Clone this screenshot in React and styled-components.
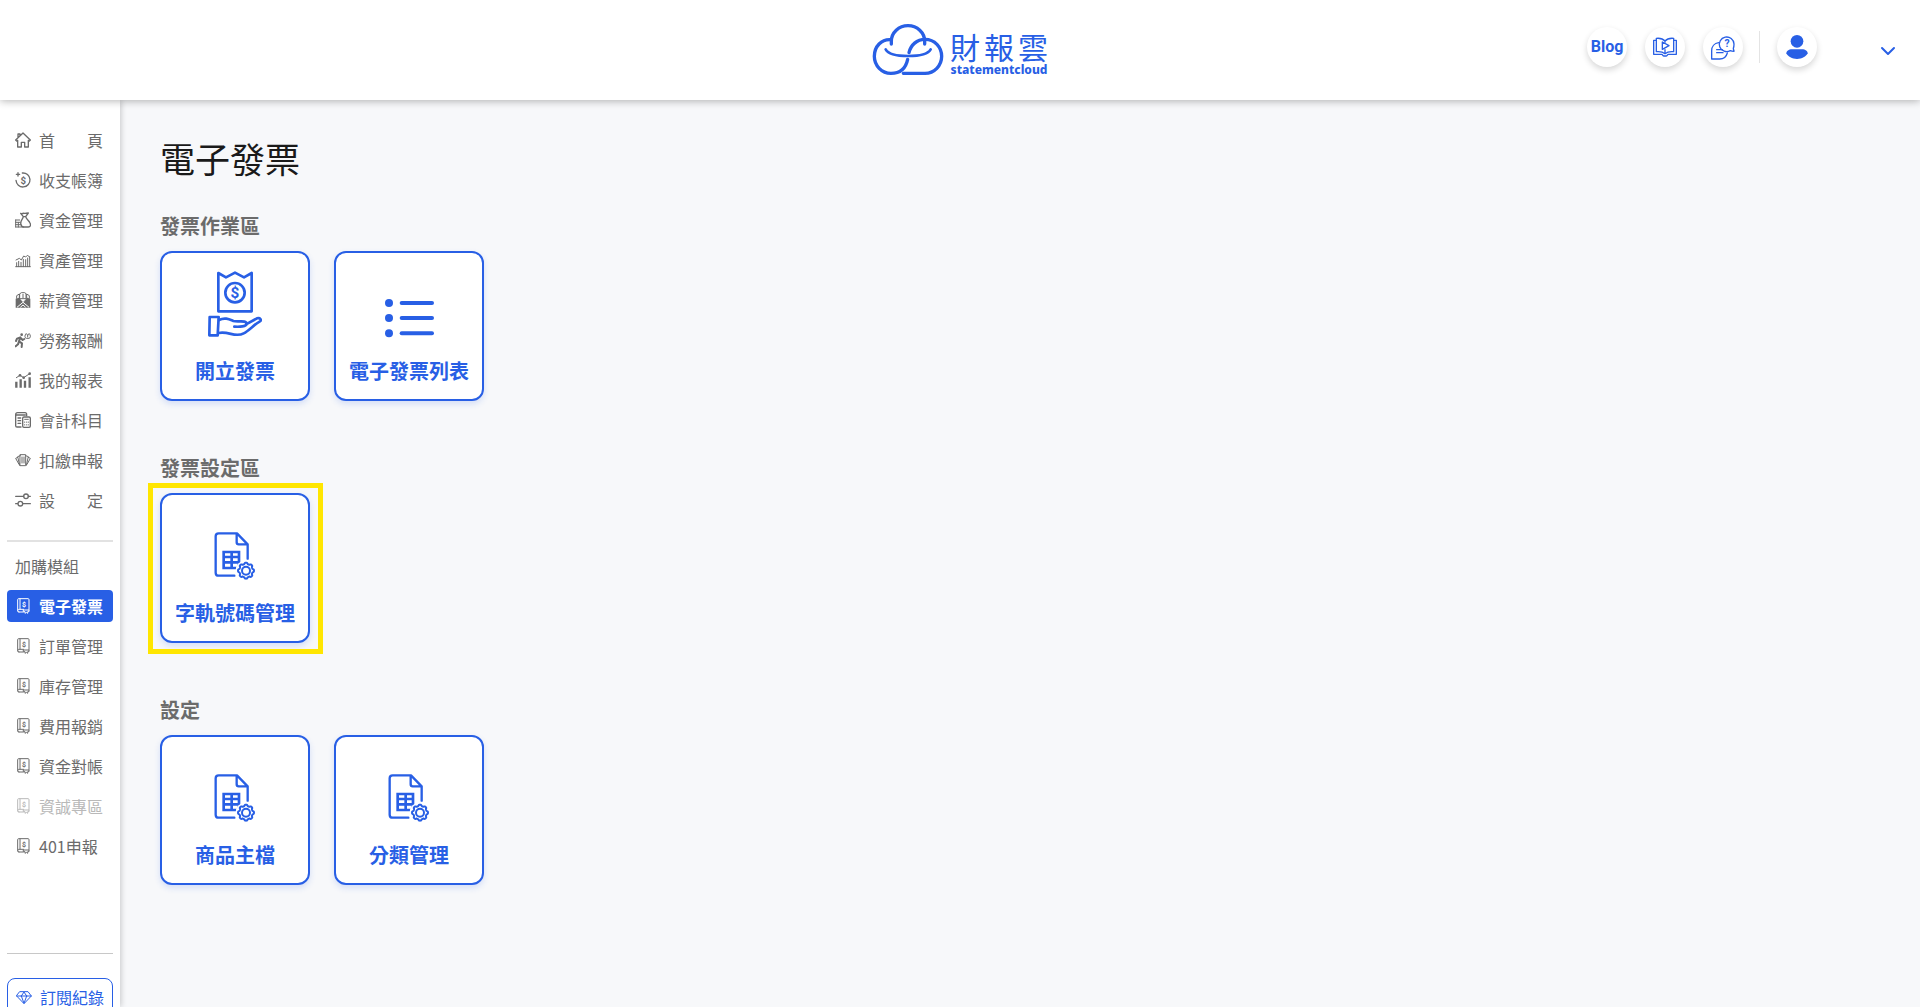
import React from 'react'
import styled, { createGlobalStyle, css } from 'styled-components'

const BLUE = '#285fe5'
const GREY = '#6b6b6b'

const GlobalStyle = createGlobalStyle`
  *, *::before, *::after {
    box-sizing: border-box;
  }

  body {
    margin: 0;
    background: #f7f8fa;
    color: #1a1a1a;
    font-family: 'Noto Sans CJK TC', 'Noto Sans', sans-serif;
    font-size: 16px;
  }

  a {
    color: inherit;
    text-decoration: none;
  }

  button {
    padding: 0;
    border: 0;
    background: none;
    font: inherit;
    cursor: pointer;
  }
`

/* ---------- icons ---------- */

const StrokeIcon = styled.svg`
  display: block;
  flex: none;
  fill: none;
  stroke: currentColor;
  stroke-width: ${({ $weight = 3 }) => $weight};
  stroke-linecap: round;
  stroke-linejoin: round;

  .solid {
    fill: currentColor;
    stroke: none;
  }

  text {
    fill: currentColor;
    stroke: none;
    font-family: Roboto, sans-serif;
    font-weight: 700;
    text-anchor: middle;
  }
`

// closed outline with eight soft teeth
const gearPath = (cx, cy, radius, depth) => {
  const steps = 96
  const points = Array.from({ length: steps }, (_, i) => {
    const angle = (i / steps) * Math.PI * 2
    const r = radius + depth * Math.tanh(2 * Math.cos(8 * angle))
    return `${(cx + r * Math.cos(angle)).toFixed(1)} ${(cy + r * Math.sin(angle)).toFixed(1)}`
  })
  return `M${points.join('L')}z`
}

const MenuSvg = ({ children }) => (
  <StrokeIcon width="16" height="16" viewBox="0 0 48 48" $weight={4} aria-hidden="true">
    {children}
  </StrokeIcon>
)

const HomeIcon = () => (
  <MenuSvg>
    <path d="M2 24 24 3l22 21-3 3-3-2v20H29V31H19v14H8V25l-3 2zM9 17V6h6v5" />
  </MenuSvg>
)

const LedgerIcon = () => (
  <MenuSvg>
    <path d="M22 3a21 21 0 1 1-19 22M9 2v10M4 7h10" />
    <text x="25" y="35" fontSize="29">$</text>
  </MenuSvg>
)

const FundIcon = () => (
  <MenuSvg>
    <path d="M17 4c4 3 7-1 11 0s6-1 12-1l-8 11h-7zM25 14c-1 8-11 13-7 24 1 5 4 7 8 7h14c7 0 8-6 5-12-3-7-11-11-13-19" />
    <path strokeWidth="3" d="M2 24h12M2 31h14M2 38h16M2 45h24M2 24v21M10 31v14" />
  </MenuSvg>
)

const AssetIcon = () => (
  <MenuSvg>
    <path strokeWidth="3" d="M3 24l10-5 6 5 7-12 6 3 5-5 6 4M2 44h44M5 32v12M11 28v16M18 31v13M25 22v22M32 23v21M38 18v26M44 14v30" />
  </MenuSvg>
)

const SalaryIcon = () => (
  <MenuSvg>
    <path className="solid" d="M2 20l10-3 13 16 12-16 9 3v27H2z" />
    <path strokeWidth="3" d="M5 19V11l8-5v15l11 11 11-11V6l8 5v8M15 5l4-3h10l4 3v15H15zM24 7v10" />
    <path stroke="#fff" strokeWidth="3" d="M7 45l17-14 17 14M17 45l7-6 7 6" />
  </MenuSvg>
)

const LabourIcon = () => (
  <MenuSvg>
    <circle className="solid" cx="20" cy="8" r="4" />
    <path strokeWidth="6" d="M16 16l-4 12 9 6-1 11M12 28L9 37l-7 6M17 18l6 6 5-3M14 17l-8 3-3 7" />
    <path strokeWidth="3" d="M33 5c-4 4-5 13 1 14h8c6-1 5-10 1-14M35 6l3 4 3-4M38 10v5" />
  </MenuSvg>
)

const ReportIcon = () => (
  <MenuSvg>
    <path strokeWidth="3" d="M4 17l11-7 11 7L44 5" />
    <path strokeWidth="7" strokeLinecap="butt" d="M4 29v18M17 22v25M30 26v21M44 16v31" />
    <circle className="solid" cx="44" cy="5" r="4" />
    <circle className="solid" cx="15" cy="10" r="4" />
    <circle className="solid" cx="26" cy="17" r="4" />
  </MenuSvg>
)

const AccountIcon = () => (
  <MenuSvg>
    <path d="M18 45H6c-3 0-4-2-4-4V8c0-4 2-6 6-6h22c4 0 5 3 5 6v3M3 9h28M9 18h8M9 26h8M9 34h8" />
    <rect x="23" y="15" width="23" height="31" rx="4" />
    <path strokeWidth="3" d="M29 22h11M29 30v1M35 30v1M40 30v1M29 38v1M35 38v1M40 38v1" />
  </MenuSvg>
)

const WithholdIcon = () => (
  <MenuSvg>
    <path strokeWidth="3" d="M16 8h16v33H16zM16 11l-8 3 6 26M32 11l8 3-6 26M8 16l-6 3 10 18M40 16l6 3-10 18M21 15v18M27 15v18" />
  </MenuSvg>
)

const SettingIcon = () => (
  <MenuSvg>
    <path d="M2 13h24M40 13h6M2 35h6M24 35h22" />
    <circle cx="33" cy="13" r="7" />
    <circle cx="16" cy="35" r="7" />
  </MenuSvg>
)

const ModuleIcon = () => (
  <MenuSvg>
    <path strokeWidth="3" d="M25 42H11c-2 0-3-2-3-4V5c0-2 1-3 3-3h28c2 0 3 1 3 3v31M15 3v30M26 34H12c-5 0-5 8 0 8" />
    <path strokeWidth="3" d="M26 36h16v5h-4v5l-4-3-4 3v-5h-4z" />
    <text x="27" y="26" fontSize="21">$</text>
  </MenuSvg>
)

const DiamondIcon = () => (
  <MenuSvg>
    <path strokeWidth="3" d="M12 8h24l10 13-22 23L2 21zM2 21h44M16 21l8 22 8-22M16 21l8-12 8 12" />
  </MenuSvg>
)

const GuideIcon = () => (
  <StrokeIcon width="24" height="20" viewBox="0 0 72 60" $weight={4} aria-hidden="true">
    <path d="M36 12c-7-8-16-9-26-8v40c10-1 19 0 26 6 7-6 16-7 26-6V4c-10-1-19 0-26 8zM36 12v4M36 38v12" />
    <path d="M10 10H2v42h24c3 0 3 5 7 5h6c4 0 4-5 7-5h24V10h-8" />
    <path d="M28 15l20 11-20 11z" />
  </StrokeIcon>
)

const SupportIcon = () => (
  <StrokeIcon width="24" height="25" viewBox="0 0 72 75" $weight={4} aria-hidden="true">
    <path d="M69 49c-5 0-9-1-11-2A22 22 0 1 1 69 27c0 6 0 9-2 13 0 4 2 6 2 9z" />
    <path d="M23 23C10 25 2 35 2 47v25h24c11 0 20-7 23-18M17 44h17M17 53h19" />
    <text x="48" y="37" fontSize="31">?</text>
  </StrokeIcon>
)

const UserIcon = () => (
  <StrokeIcon width="22" height="24" viewBox="0 0 66 72" aria-hidden="true">
    <circle className="solid" cx="33" cy="19" r="19" />
    <path className="solid" d="M18 43h30c10 0 17 6 17 12-5 10-17 17-32 17S6 65 1 55c0-6 7-12 17-12z" />
  </StrokeIcon>
)

const ChevronIcon = () => (
  <StrokeIcon width="16" height="10" viewBox="0 0 48 30" $weight={6} aria-hidden="true">
    <path d="M6 6l18 18L42 6" />
  </StrokeIcon>
)

const InvoiceIcon = () => (
  <StrokeIcon width="54" height="67" viewBox="0 0 162 201" $weight={8} aria-hidden="true">
    <path d="M31 6l23 13 27-14 27 14 23-13v115H31z" />
    <circle cx="81" cy="65" r="29" />
    <text x="81" y="81" fontSize="46">$</text>
    <path d="M5 138h27l-3 55H4z" />
    <path d="M33 147c18-9 31-2 43 3 14 4 39-4 40 8 0 9-22 10-37 9M114 160l33-18c10-3 14 5 9 9-17 9-33 28-49 36-25 14-44-7-75-1" />
  </StrokeIcon>
)

const ListIcon = () => (
  <StrokeIcon width="50" height="39" viewBox="-3 0 150 117" $weight={12} aria-hidden="true">
    {[12, 57, 103].map((y) => (
      <React.Fragment key={y}>
        <circle className="solid" cx="12" cy={y} r="12" />
        <path d={`M50 ${y}h91`} />
      </React.Fragment>
    ))}
  </StrokeIcon>
)

const FileGearIcon = () => (
  <StrokeIcon width="42" height="48" viewBox="0 0 126 144" $weight={7} aria-hidden="true">
    <path d="M61 131H14c-6 0-9-4-9-9V13c0-6 3-9 9-9h55l32 33v43M68 5v26c0 4 2 6 6 6h26" />
    <path strokeLinejoin="miter" strokeWidth="8" d="M29 60h46v48H29zM29 75h46M29 91h46M53 60v48" />
    <circle cx="96" cy="116" r="31" fill="#fff" stroke="none" />
    <circle cx="96" cy="116" r="12" strokeWidth="6" />
    <path strokeWidth="6" d={gearPath(96, 116, 22, 2)} />
  </StrokeIcon>
)

/* ---------- header ---------- */

const Header = styled.header`
  position: relative;
  z-index: 2;
  flex: none;
  display: grid;
  grid-template-columns: 1fr auto 1fr;
  align-items: center;
  height: 100px;
  padding: 0 24px;
  background: #fff;
  box-shadow: 0 1px 8px rgba(0, 0, 0, 0.3);
`

const Logo = styled.a`
  grid-column: 2;
  display: flex;
  align-items: center;
  gap: 6px;
  color: ${BLUE};
`

const LogoText = styled.span`
  display: flex;
  flex-direction: column;
  padding-top: 6px;
`

const LogoName = styled.span`
  display: flex;
  justify-content: space-between;
  gap: 4px;
  font-size: 30px;
  font-weight: 400;
  line-height: 34px;
`

const LogoSub = styled.span`
  font-family: 'Noto Sans', sans-serif;
  font-size: 12px;
  font-weight: 800;
  line-height: 14px;
  text-align: center;
`

const Tools = styled.div`
  display: flex;
  align-items: center;
  justify-content: flex-end;
  gap: 18px;
  padding-bottom: 6px;
`

const roundTool = css`
  display: flex;
  align-items: center;
  justify-content: center;
  width: 40px;
  height: 40px;
  border-radius: 50%;
  background: #fff;
  color: ${BLUE};
  box-shadow: 0 3px 6px rgba(0, 0, 0, 0.16);
`

const BlogLink = styled.a`
  ${roundTool}
  padding-bottom: 2px;
  font-family: Roboto, sans-serif;
  font-size: 16px;
  font-weight: 700;
`

const ToolButton = styled.button`
  ${roundTool}
`

const Account = styled.div`
  position: relative;
  display: flex;
  align-items: center;
  justify-content: space-between;
  width: 135px;
  padding-left: 16px;

  &::before {
    content: '';
    position: absolute;
    left: -2px;
    width: 1px;
    height: 32px;
    background: #e4e4e4;
  }
`

const ExpandButton = styled.button`
  padding-top: 8px;
  color: ${BLUE};
`

/* ---------- sidebar ---------- */

const Page = styled.div`
  display: flex;
  flex-direction: column;
  height: 100vh;
`

const Body = styled.div`
  flex: 1;
  display: flex;
  min-height: 0;
`

const Sidebar = styled.nav`
  flex: none;
  width: 120px;
  padding: 24px 7px 0;
  overflow: hidden;
  background: #fff;
  box-shadow: 1px 0 6px rgba(0, 0, 0, 0.2);
`

const Menu = styled.ul`
  display: flex;
  flex-direction: column;
  gap: 8px;
  margin: 0;
  padding: 0;
  list-style: none;
`

const MenuLink = styled.a`
  display: flex;
  align-items: center;
  gap: 8px;
  height: 32px;
  padding-left: 8px;
  border-radius: 4px;
  color: ${({ $disabled }) => ($disabled ? '#b9b9b9' : GREY)};
  white-space: nowrap;

  ${({ $active }) =>
    $active &&
    css`
      background: ${BLUE};
      color: #fff;
      font-weight: 700;
    `}
`

const Divider = styled.hr`
  height: ${({ $thick }) => ($thick ? 2 : 1)}px;
  margin: ${({ $thick }) => ($thick ? '24px 0 12px' : '91px 0 24px')};
  border: 0;
  background: ${({ $thick }) => ($thick ? '#e2e2e2' : '#c8c8c8')};
`

const MenuTitle = styled.p`
  margin: 0 0 12px;
  padding-left: 8px;
  color: ${GREY};
  line-height: 24px;
`

const RecordLink = styled.a`
  display: flex;
  align-items: center;
  gap: 8px;
  height: 38px;
  padding-left: 8px;
  border: 1px solid ${BLUE};
  border-radius: 8px;
  color: ${BLUE};
  white-space: nowrap;
`

/* ---------- main ---------- */

const Main = styled.main`
  flex: 1;
  padding: 34px 40px;
  overflow: hidden;
`

const Title = styled.h1`
  margin: 0 0 29px;
  font-size: 35px;
  font-weight: 400;
  line-height: 48px;
`

const Section = styled.section`
  margin-bottom: 52px;
`

const SectionTitle = styled.h2`
  margin: 0 0 10px;
  color: ${GREY};
  font-size: 20px;
  font-weight: 700;
  line-height: 30px;
`

const Cards = styled.div`
  display: flex;
  flex-wrap: wrap;
  gap: 24px;
`

const Card = styled.a`
  position: relative;
  display: flex;
  flex-direction: column;
  align-items: center;
  justify-content: flex-end;
  gap: 18px;
  width: 150px;
  height: 150px;
  padding-bottom: 13px;
  border: 2px solid ${BLUE};
  border-radius: 12px;
  background: #fff;
  color: ${BLUE};
  font-size: 20px;
  font-weight: 700;
  line-height: 30px;
  white-space: nowrap;
  box-shadow: 0 3px 6px rgba(40, 95, 229, 0.16);
`

const Highlight = styled.span`
  position: absolute;
  inset: -12px -15px -13px -14px;
  border: 5px solid #ffe600;
  pointer-events: none;
`

const mainMenu = [
  { label: '首\u3000\u3000頁', Icon: HomeIcon },
  { label: '收支帳簿', Icon: LedgerIcon },
  { label: '資金管理', Icon: FundIcon },
  { label: '資產管理', Icon: AssetIcon },
  { label: '薪資管理', Icon: SalaryIcon },
  { label: '勞務報酬', Icon: LabourIcon },
  { label: '我的報表', Icon: ReportIcon },
  { label: '會計科目', Icon: AccountIcon },
  { label: '扣繳申報', Icon: WithholdIcon },
  { label: '設\u3000\u3000定', Icon: SettingIcon },
]

const moduleMenu = [
  { label: '電子發票', active: true },
  { label: '訂單管理' },
  { label: '庫存管理' },
  { label: '費用報銷' },
  { label: '資金對帳' },
  { label: '資誠專區', disabled: true },
  { label: '401申報' },
]

const sections = [
  {
    title: '發票作業區',
    cards: [
      { label: '開立發票', Icon: InvoiceIcon },
      { label: '電子發票列表', Icon: ListIcon },
    ],
  },
  {
    title: '發票設定區',
    cards: [{ label: '字軌號碼管理', Icon: FileGearIcon, highlight: true }],
  },
  {
    title: '設定',
    cards: [
      { label: '商品主檔', Icon: FileGearIcon },
      { label: '分類管理', Icon: FileGearIcon },
    ],
  },
]

function MenuList({ items }) {
  return (
    <Menu>
      {items.map(({ label, Icon = ModuleIcon, active, disabled }) => (
        <li key={label}>
          <MenuLink
            href="#"
            $active={active}
            $disabled={disabled}
            aria-current={active ? 'page' : undefined}
            aria-disabled={disabled}
          >
            <Icon />
            {label}
          </MenuLink>
        </li>
      ))}
    </Menu>
  )
}

function TopBar() {
  return (
    <Header>
      <Logo href="#">
        <StrokeIcon width="72" height="52" viewBox="0 0 216 156" $weight={10} aria-hidden="true">
          <path d="M58 60V52a50 47 0 0 1 100 0v8" />
          <path d="M58 47C28 44 7 68 7 97c0 28 22 51 50 51 31 0 45-18 50-42" />
          <path d="M111 86c5-23 24-40 48-40 29 0 50 23 50 51s-22 51-50 51H94" />
          <path strokeWidth="8" d="M41 76c7 13 34 20 67 20s61-7 68-20" />
        </StrokeIcon>
        <LogoText>
          <LogoName>
            <span>財</span>
            <span>報</span>
            <span>雲</span>
          </LogoName>
          <LogoSub>statementcloud</LogoSub>
        </LogoText>
      </Logo>
      <Tools>
        <BlogLink href="#">Blog</BlogLink>
        <ToolButton type="button" aria-label="教學">
          <GuideIcon />
        </ToolButton>
        <ToolButton type="button" aria-label="客服">
          <SupportIcon />
        </ToolButton>
        <Account>
          <ToolButton type="button" aria-label="帳號">
            <UserIcon />
          </ToolButton>
          <ExpandButton type="button" aria-label="展開">
            <ChevronIcon />
          </ExpandButton>
        </Account>
      </Tools>
    </Header>
  )
}

function App() {
  return (
    <Page>
      <GlobalStyle />
      <TopBar />
      <Body>
        <Sidebar>
          <MenuList items={mainMenu} />
          <Divider $thick />
          <MenuTitle>加購模組</MenuTitle>
          <MenuList items={moduleMenu} />
          <Divider />
          <RecordLink href="#">
            <DiamondIcon />
            訂閱紀錄
          </RecordLink>
        </Sidebar>
        <Main>
          <Title>電子發票</Title>
          {sections.map(({ title, cards }) => (
            <Section key={title}>
              <SectionTitle>{title}</SectionTitle>
              <Cards>
                {cards.map(({ label, Icon, highlight }) => (
                  <Card href="#" key={label}>
                    <Icon />
                    {label}
                    {highlight && <Highlight />}
                  </Card>
                ))}
              </Cards>
            </Section>
          ))}
        </Main>
      </Body>
    </Page>
  )
}

export default App
